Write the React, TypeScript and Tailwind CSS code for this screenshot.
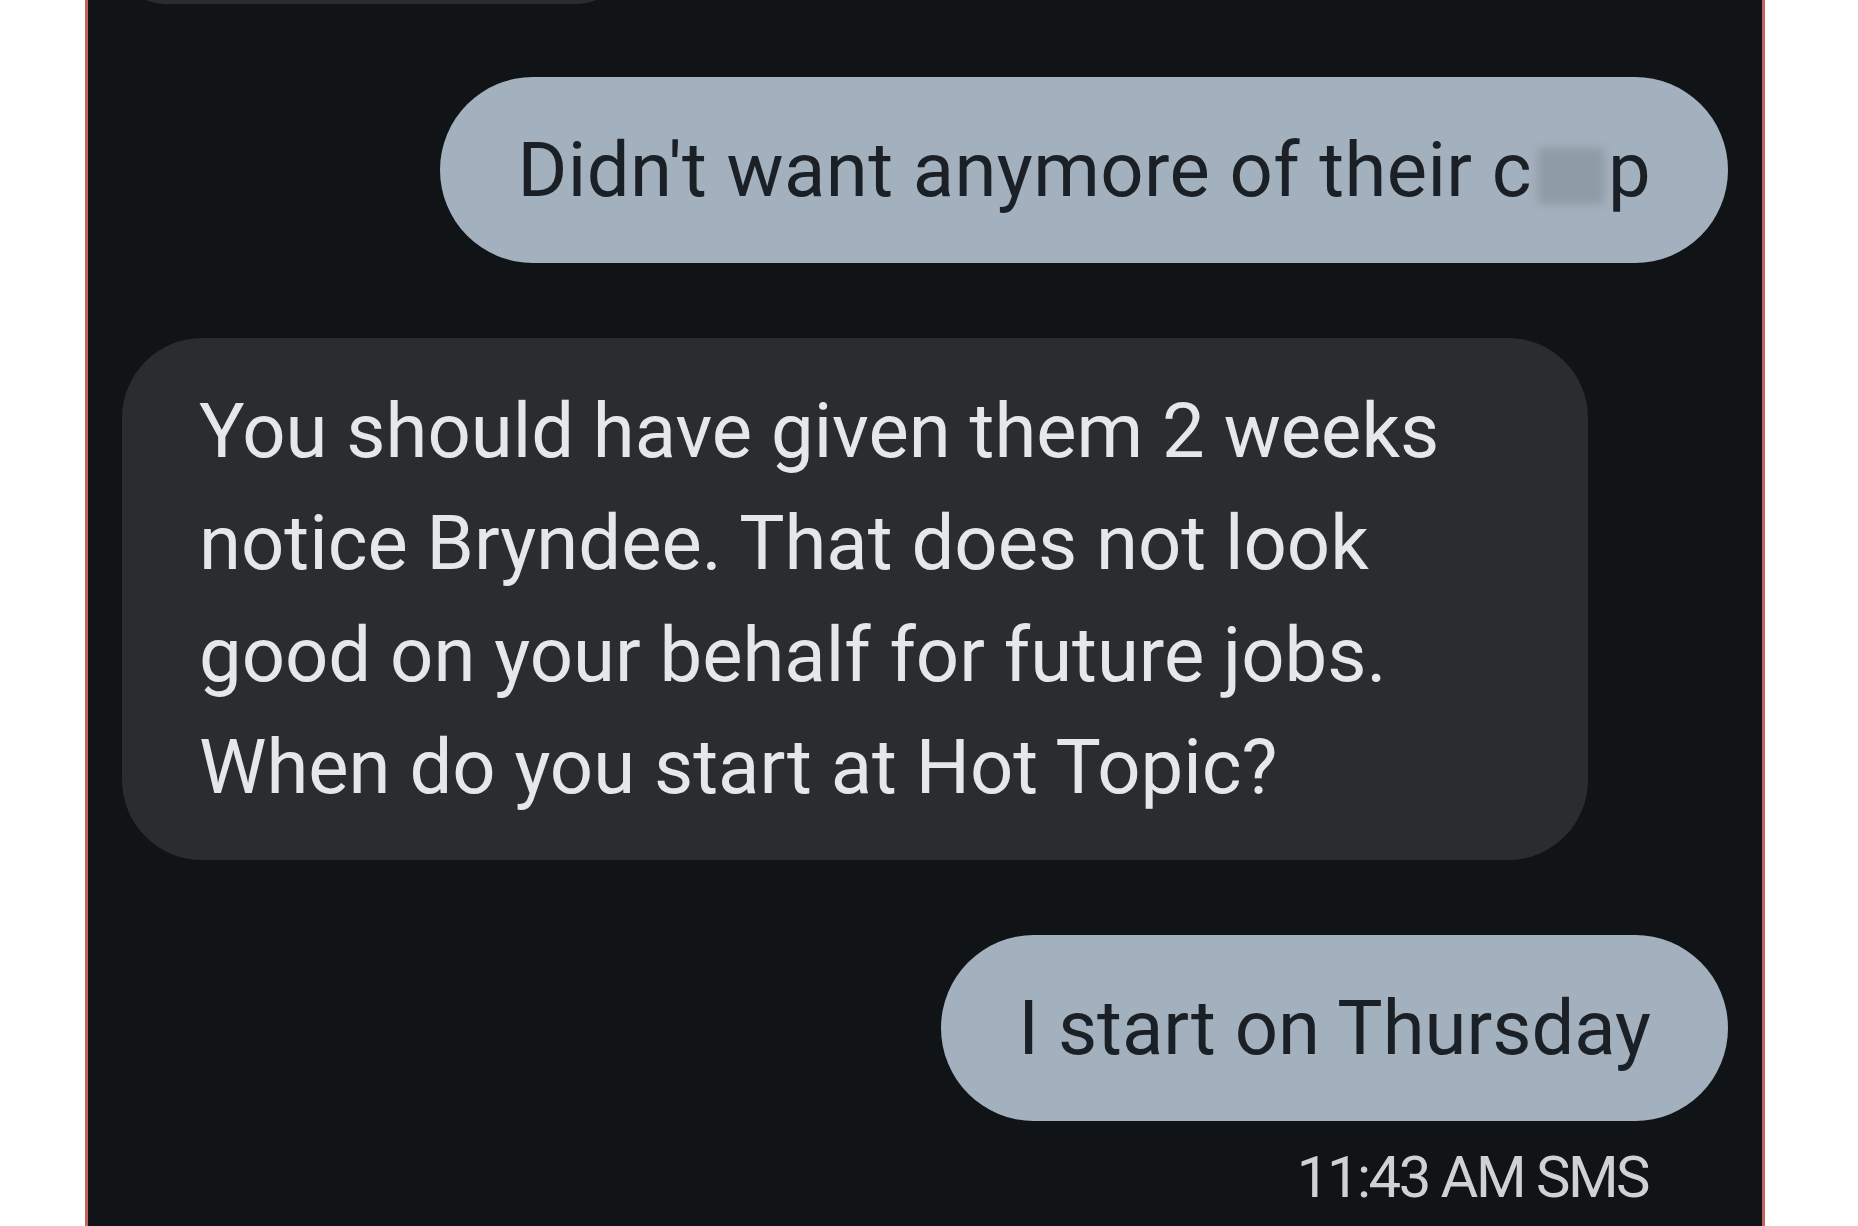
const font = { fontFamily: 'Roboto, "Noto Sans", Arial, sans-serif' };

export default function App() {
  return (
    <main className="h-[1226px] w-full overflow-hidden bg-white" style={font}>
      <div className="ml-[85px] flex h-full w-[1680px] flex-col overflow-hidden border-x-[3px] border-[#c3645d] bg-[#111416] px-[34px]">
        {/* tail of the previous incoming message */}
        <div className="-mt-[80px] h-[84px] w-[498px] shrink-0 rounded-[80px] bg-[#2a2d2f]" />

        <div className="mt-[73px] flex justify-end">
          <div className="rounded-full bg-[#a3b0bd] px-[77px] py-[37px] text-[76px] leading-[112px] tracking-[0.4px] whitespace-nowrap text-[#1a2026]">
            Didn't want anymore of their c
            <span className="relative inline-block w-[76px] text-transparent">
              ra
              <span className="absolute left-[6px] right-[4px] top-[34px] h-[56px] bg-[#8f9ba5] blur-[4px]" />
            </span>
            p
          </div>
        </div>

        <div className="mt-[75px] flex justify-start">
          <div className="w-[1466px] rounded-[80px] bg-[#2a2c2e] py-[37px] pl-[77px] text-[76px] leading-[112px] whitespace-nowrap text-[#e6e7e8]">
            <span className="block">You should have given them 2 weeks</span>
            <span className="block">notice Bryndee. That does not look</span>
            <span className="block">good on your behalf for future jobs.</span>
            <span className="block">When do you start at Hot Topic?</span>
          </div>
        </div>

        <div className="mt-[75px] flex justify-end">
          <div className="rounded-full bg-[#a3b0bd] px-[77px] py-[37px] text-[76px] leading-[112px] whitespace-nowrap text-[#1a2026]">
            I start on Thursday
          </div>
        </div>

        <div className="mt-[27px] flex justify-end pr-[80px]">
          <span className="text-[58px] leading-[58px] tracking-[-2.5px] text-[#cfd1d3]">
            11:43 AM SMS
          </span>
        </div>
      </div>
    </main>
  );
}
